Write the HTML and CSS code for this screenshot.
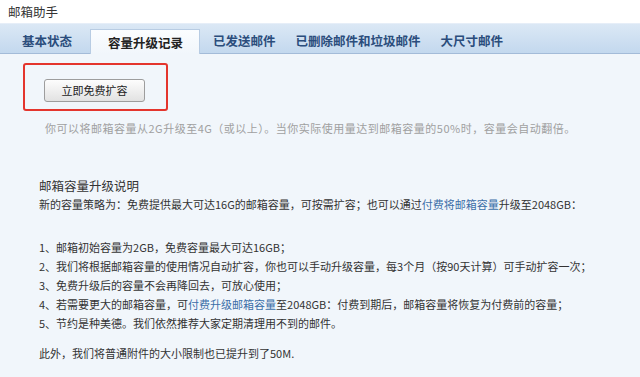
FILE: index.html
```html
<!DOCTYPE html>
<html lang="zh-CN">
<head>
<meta charset="utf-8">
<title>邮箱助手</title>
<link rel="stylesheet" href="styles.css">
</head>
<body>
<div class="header">邮箱助手</div>
<div class="tabs">
  <div class="tab first">基本状态</div>
  <div class="tab active">容量升级记录</div>
  <div class="tab">已发送邮件</div>
  <div class="tab">已删除邮件和垃圾邮件</div>
  <div class="tab">大尺寸邮件</div>
</div>
<div class="content">
  <div class="highlight">
    <button class="btn">立即免费扩容</button>
  </div>
  <p class="hint">你可以将邮箱容量从2G升级至4G（或以上）。当你实际使用量达到邮箱容量的50%时，容量会自动翻倍。</p>
  <h2 class="title">邮箱容量升级说明</h2>
  <p class="policy">新的容量策略为：免费提供最大可达16G的邮箱容量，可按需扩容；也可以通过<a class="link">付费将邮箱容量</a>升级至2048GB：</p>
  <ol class="list">
    <li>1、邮箱初始容量为2GB，免费容量最大可达16GB；</li>
    <li>2、我们将根据邮箱容量的使用情况自动扩容，你也可以手动升级容量，每3个月（按90天计算）可手动扩容一次；</li>
    <li>3、免费升级后的容量不会再降回去，可放心使用；</li>
    <li>4、若需要更大的邮箱容量，可<a class="link">付费升级邮箱容量</a>至2048GB：付费到期后，邮箱容量将恢复为付费前的容量；</li>
    <li>5、节约是种美德。我们依然推荐大家定期清理用不到的邮件。</li>
  </ol>
  <p class="footer">此外，我们将普通附件的大小限制也已提升到了50M.</p>
</div>
</body>
</html>
```
FILE: styles.css
```css
* { box-sizing: border-box; }
html, body { margin: 0; padding: 0; }
body {
  background: #f1f6fb;
  font-family: "Noto Sans CJK SC", "Noto Sans", sans-serif;
  color: #333;
  width: 640px;
  height: 377px;
  overflow: hidden;
}
.header {
  height: 23px;
  line-height: 23px;
  background: #fff;
  padding-left: 8px;
  font-size: 12.5px;
  color: #333;
}
.tabs {
  height: 31px;
  display: flex;
  align-items: flex-end;
  padding-left: 12px;
  background: linear-gradient(#dbe8f5, #c3d8ee);
  border-top: 1px solid #e6eef8;
  border-bottom: 1px solid #a3bbd8;
}
.tab {
  height: 24px;
  line-height: 24px;
  padding: 0 10px;
  font-size: 12.5px;
  font-weight: bold;
  color: #2b4d7c;
  white-space: nowrap;
}
.tab.active {
  height: 25px;
  margin: 0 3px -1px 8px;
  padding: 0 16px 0 17px;
  color: #222;
  background: linear-gradient(#fbfdff, #f1f6fb);
  border: 1px solid #b8cce3;
  border-bottom: none;
  line-height: 25px;
}
.content {
  padding-left: 39px;
}
.highlight {
  width: 145px;
  height: 48px;
  margin: 9px 0 0 -16px;
  padding: 14px 0 0 19px;
  border: 2px solid #e4352d;
  border-radius: 3px;
}
.btn {
  display: block;
  width: 101px;
  height: 23px;
  padding: 0;
  font-family: inherit;
  font-size: 11px;
  color: #222;
  background: linear-gradient(#fdfdfd, #e2e2e2);
  border: 1px solid #9d9d9d;
  border-radius: 3px;
  line-height: 21px;
}
.hint {
  margin: 8px 0 0 6px;
  font-size: 11px;
  line-height: 18px;
  color: #a0a0a0;
  letter-spacing: 0.5px;
}
.title {
  margin: 40px 0 0;
  font-size: 12.5px;
  font-weight: normal;
  line-height: 18px;
  color: #333;
}
.policy {
  margin: 0;
  font-size: 11px;
  line-height: 18px;
  color: #333;
}
.link {
  color: #3b6ea8;
  text-decoration: none;
}
.list {
  list-style: none;
  margin: 25px 0 0;
  padding: 0;
  font-size: 11px;
  line-height: 19px;
  color: #333;
}
.footer {
  margin: 11px 0 0;
  font-size: 11px;
  line-height: 19px;
  color: #333;
}
```
